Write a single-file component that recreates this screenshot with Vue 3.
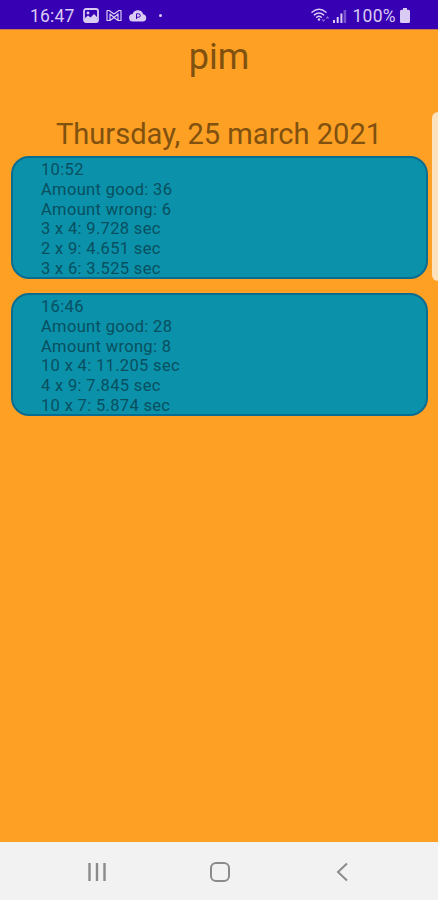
<script setup>
import { ref } from 'vue'

const player = ref('pim')
const day = ref('Thursday, 25 march 2021')

const results = ref([
  {
    time: '10:52',
    good: 36,
    wrong: 6,
    sums: [
      { sum: '3 x 4', sec: '9.728' },
      { sum: '2 x 9', sec: '4.651' },
      { sum: '3 x 6', sec: '3.525' }
    ]
  },
  {
    time: '16:46',
    good: 28,
    wrong: 8,
    sums: [
      { sum: '10 x 4', sec: '11.205' },
      { sum: '4 x 9', sec: '7.845' },
      { sum: '10 x 7', sec: '5.874' }
    ]
  }
])
</script>

<template>
  <div class="screen">
    <header class="status-bar">
      <span class="clock">16:47</span>
      <!-- picture -->
      <svg class="icon-picture" width="16" height="15" viewBox="0 0 16 15">
        <rect x="1" y="1" width="14" height="13" rx="2" fill="none" stroke="currentColor" stroke-width="1.8" />
        <circle cx="5" cy="5" r="1.4" fill="currentColor" />
        <path d="M2 13V10L5 7.500L7.500 9.500L11 6L14 9V13Z" fill="currentColor" />
      </svg>
      <!-- mail -->
      <svg class="icon-mail" width="16" height="13" viewBox="0 0 16 13">
        <path
          d="M1 1.500V11.500H4L8 8.500L12 11.500H15V1.500H13L8 5L3 1.500ZM4 11V5L8 8.500L12 5V11"
          fill="none"
          stroke="currentColor"
          stroke-width="1.200"
          stroke-linejoin="round"
        />
      </svg>
      <!-- cloud -->
      <svg class="icon-cloud" width="18" height="13" viewBox="0 0 18 13">
        <path d="M4 12.500A3.700 3.700 0 0 1 3.600 5.100A5.600 5.600 0 0 1 14.200 5.200A3.700 3.700 0 0 1 14 12.500Z" fill="currentColor" />
        <path d="M7.500 10V4.800H9.600A1.700 1.700 0 0 1 9.600 8.200H7.500" fill="none" stroke="#3700b3" stroke-width="1" />
      </svg>
      <span class="dot"></span>
      <span class="spacer"></span>
      <!-- wifi -->
      <svg class="icon-wifi" width="20" height="15" viewBox="0 0 20 15">
        <g fill="none" stroke="currentColor" stroke-width="1.400" stroke-linecap="round">
          <path d="M1 4.300Q8 -1.700 15 4.300" />
          <path d="M3.300 6.900Q8 3 12.700 6.900" />
          <path d="M5.600 9.300Q8 7.300 10.400 9.300" />
        </g>
        <circle cx="8" cy="11.500" r="1.200" fill="currentColor" />
        <path d="M10.500 11.500L12.500 14L14.500 11.500ZM14.500 10.500L16.500 8L18.500 10.500Z" fill="currentColor" opacity="0.5" />
      </svg>
      <!-- signal -->
      <svg class="icon-signal" width="14" height="14" viewBox="0 0 14 14">
        <g fill="currentColor">
          <rect x="0" y="11" width="2" height="3" />
          <rect x="3.700" y="8" width="2" height="6" />
          <rect x="7.400" y="4.500" width="2" height="9.500" />
          <rect x="10.600" y="1" width="2.600" height="13" opacity="0.4" />
        </g>
      </svg>
      <span class="percent">100%</span>
      <!-- battery -->
      <svg class="icon-battery" width="10" height="15" viewBox="0 0 10 15">
        <path d="M3 0H7V1.700H8.500Q10 1.700 10 3.200V13.500Q10 15 8.500 15H1.500Q0 15 0 13.500V3.200Q0 1.700 1.500 1.700H3Z" fill="currentColor" />
      </svg>
    </header>

    <main class="content">
      <h1>{{ player }}</h1>
      <h2>{{ day }}</h2>
      <section v-for="result in results" :key="result.time" class="card">
        <p>{{ result.time }}</p>
        <p>Amount good: {{ result.good }}</p>
        <p>Amount wrong: {{ result.wrong }}</p>
        <p v-for="item in result.sums" :key="item.sum">{{ item.sum }}: {{ item.sec }} sec</p>
      </section>
      <div class="edge-handle"></div>
    </main>

    <nav class="nav-bar">
      <svg width="20" height="20" viewBox="0 0 20 20">
        <path d="M2.500 1V19M10 1V19M17.500 1V19" stroke="currentColor" stroke-width="2.400" />
      </svg>
      <svg width="20" height="20" viewBox="0 0 20 20">
        <rect x="1" y="1" width="18" height="18" rx="5" fill="none" stroke="currentColor" stroke-width="2" />
      </svg>
      <svg width="20" height="20" viewBox="0 0 20 20">
        <path d="M15 1.500L6 10L15 18.500" fill="none" stroke="currentColor" stroke-width="2" />
      </svg>
    </nav>
  </div>
</template>

<style>
body {
  margin: 0;
}
</style>

<style scoped>
.screen {
  display: flex;
  flex-direction: column;
  width: 438px;
  height: 900px;
  overflow: hidden;
  background: #fea024;
  font-family: Roboto, sans-serif;
}

.status-bar {
  display: flex;
  align-items: center;
  box-sizing: border-box;
  height: 29px;
  padding: 2px 28px 0 30px;
  background: #3700b3;
  color: #d9cbf3;
  font-size: 17.5px;
}

.clock {
  letter-spacing: 0.2px;
}

.icon-picture {
  margin-left: 8px;
}

.icon-mail {
  margin-left: 7px;
}

.icon-cloud {
  margin-left: 7px;
}

.dot {
  width: 3px;
  height: 3px;
  margin-left: 12px;
  border-radius: 50%;
  background: currentColor;
}

.spacer {
  flex: 1;
}

.icon-signal {
  margin-left: 2px;
}

.percent {
  margin-left: 5px;
  letter-spacing: 0.3px;
}

.icon-battery {
  margin-left: 4px;
}

.content {
  position: relative;
  flex: 1;
  border-top: 1px solid #c77a50;
  color: #80510f;
}

h1,
h2,
p {
  margin: 0;
  font-weight: 400;
}

h1 {
  height: 85px;
  font-size: 36px;
  line-height: 55px;
  text-align: center;
}

h2 {
  height: 41px;
  font-size: 29.1px;
  line-height: 39px;
  text-align: center;
}

.card {
  box-sizing: border-box;
  height: 123px;
  margin: 0 10px 14px 11px;
  padding: 2px 0 0 28px;
  border: 2px solid #0b6c91;
  border-radius: 18px;
  background: #0b92aa;
  color: #084f60;
  font-size: 16.5px;
  line-height: 19.8px;
  letter-spacing: 0.33px;
}

.edge-handle {
  position: absolute;
  top: 82px;
  right: 0;
  width: 6px;
  height: 169px;
  border-radius: 6px 0 0 6px;
  background: #fce1bd;
}

.nav-bar {
  display: flex;
  align-items: center;
  justify-content: space-between;
  box-sizing: border-box;
  height: 58px;
  padding: 2px 86px 0 87px;
  background: #f2f2f2;
  color: #8b8b8b;
}
</style>
